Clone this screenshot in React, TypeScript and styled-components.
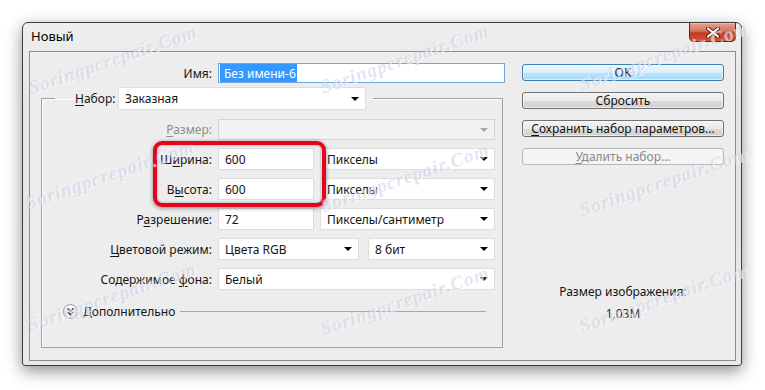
import styled, { createGlobalStyle } from "styled-components";

const GlobalStyle = createGlobalStyle`
  html, body {
    margin: 0;
    padding: 0;
    background: #ffffff;
  }
  body {
    font-family: "Noto Sans", "Liberation Sans", sans-serif;
    font-size: 12px;
    color: #141414;
  }
  *, *::before, *::after {
    box-sizing: border-box;
  }
  u {
    text-decoration-thickness: 1px;
    text-underline-offset: 2px;
  }
`;

const Page = styled.div`
  position: relative;
  width: 765px;
  height: 390px;
  overflow: hidden;
  padding: 22px 0 0 22px;
`;

const Window = styled.div`
  width: 720px;
  height: 344px;
  display: flex;
  flex-direction: column;
  padding: 0 5px 4px 6px;
  border: 1px solid #3d3d3d;
  border-radius: 6px 6px 3px 3px;
  background: linear-gradient(180deg, #eeeeee 0%, #e4e4e4 30%, #e9e9e9 100%);
  box-shadow: 0 5px 16px rgba(0, 0, 0, 0.45);
`;

const TitleBar = styled.div`
  height: 28px;
  display: flex;
  justify-content: space-between;
  align-items: flex-start;
`;

const Title = styled.div`
  line-height: 27px;
  padding-left: 2px;
  font-size: 13px;
  color: #000;
`;

const CloseButton = styled.div`
  width: 47px;
  height: 19px;
  display: flex;
  align-items: center;
  justify-content: center;
  border: 1px solid #6b1f14;
  border-top: none;
  border-radius: 0 0 5px 5px;
  background: linear-gradient(180deg, #e8a192 0%, #d6745f 45%, #c2391f 55%, #d0563a 100%);
  box-shadow: inset 0 1px 0 rgba(255, 255, 255, 0.35);
`;

const Content = styled.div`
  flex: 1;
  display: flex;
  border: 1px solid #8c8c8c;
  background: #ededed;
`;

const LeftCol = styled.div`
  width: 476px;
  padding-top: 11px;
  display: flex;
  flex-direction: column;
`;

const NameRow = styled.div`
  display: flex;
  align-items: center;
`;

const Label = styled.div<{ $w: number; $muted?: boolean }>`
  width: ${(p) => p.$w}px;
  flex-shrink: 0;
  padding-right: 6px;
  text-align: right;
  white-space: nowrap;
  color: ${(p) => (p.$muted ? "#8d8d8d" : "#141414")};
`;

const TextField = styled.div<{ $w: number; $h?: number; $focus?: boolean }>`
  width: ${(p) => p.$w}px;
  height: ${(p) => p.$h ?? 22}px;
  flex-shrink: 0;
  display: flex;
  align-items: center;
  padding-left: ${(p) => (p.$focus ? 1 : 6)}px;
  background: #ffffff;
  border: 1px solid ${(p) => (p.$focus ? "#6fa7dc" : "#dcdcdc")};
  white-space: nowrap;
  overflow: hidden;
`;

const Selected = styled.span`
  height: 100%;
  display: flex;
  align-items: center;
  padding: 0 1px 0 4px;
  background: #3399ff;
  color: #ffffff;
`;

const Select = styled.div<{ $w: number; $h?: number; $disabled?: boolean }>`
  width: ${(p) => p.$w}px;
  height: ${(p) => p.$h ?? 22}px;
  flex-shrink: 0;
  display: flex;
  align-items: center;
  justify-content: space-between;
  padding: 0 6px 0 6px;
  background: ${(p) => (p.$disabled ? "#f2f2f2" : "#ffffff")};
  border: 1px solid ${(p) => (p.$disabled ? "#d4d4d4" : "#dedede")};
  white-space: nowrap;
`;

const Arrow = styled.span<{ $disabled?: boolean }>`
  width: 0;
  height: 0;
  border-left: 4px solid transparent;
  border-right: 4px solid transparent;
  border-top: 4px solid ${(p) => (p.$disabled ? "#a8a8a8" : "#000000")};
`;

const GroupBox = styled.fieldset`
  margin: 4px 0 12px 11px;
  width: 462px;
  flex: 1;
  padding: 9px 6px 0 0;
  border: 1px solid #a3a3a3;
  box-shadow: inset 1px 1px 0 #fafafa;
  min-width: 0;
`;

const Legend = styled.legend`
  margin-left: 13px;
  padding: 0 7px 0 20px;
  display: flex;
  align-items: center;
`;

const Rows = styled.div`
  display: flex;
  flex-direction: column;
  gap: 8px;
`;

const Row = styled.div`
  display: flex;
  align-items: center;
`;

const Controls = styled.div<{ $gap?: number }>`
  display: flex;
  gap: ${(p) => p.$gap ?? 6}px;
`;

const Highlight = styled.div`
  position: relative;
  display: flex;
  flex-direction: column;
  gap: 8px;
  &::after {
    content: "";
    position: absolute;
    left: 111px;
    top: -7px;
    width: 173px;
    height: 66px;
    border: 4px solid #e3051b;
    border-radius: 9px;
    box-shadow: 0 1px 4px rgba(0, 0, 0, 0.45), inset 0 0 3px rgba(0, 0, 0, 0.35);
    pointer-events: none;
  }
`;

const MoreRow = styled.div`
  margin-top: 14px;
  padding-left: 21px;
  display: flex;
  align-items: center;
  height: 15px;
`;

const RoundToggle = styled.div`
  width: 15px;
  height: 15px;
  border-radius: 50%;
  border: 1px solid #9c9c9c;
  background: radial-gradient(circle at 40% 30%, #ffffff 0%, #eeeeee 55%, #d2d2d2 100%);
  display: flex;
  align-items: center;
  justify-content: center;
  margin-right: 5px;
`;

const Divider = styled.div`
  flex: 1;
  height: 1px;
  margin: 0 10px 0 5px;
  background: #a8a8a8;
`;

const RightCol = styled.div`
  width: 202px;
  margin-left: 16px;
  padding-top: 12px;
  display: flex;
  flex-direction: column;
  gap: 11px;
`;

const Button = styled.div<{ $default?: boolean; $disabled?: boolean }>`
  height: 17px;
  display: flex;
  align-items: center;
  justify-content: center;
  border-radius: 3px;
  white-space: nowrap;
  color: ${(p) => (p.$disabled ? "#8a8a8a" : "#111111")};
  border: 1px solid
    ${(p) => (p.$default ? "#3c7fb1" : p.$disabled ? "#b5b9bc" : "#707070")};
  background: ${(p) =>
    p.$disabled
      ? "#f4f4f4"
      : p.$default
      ? "linear-gradient(180deg, #eaf6fd 0%, #d9f0fc 50%, #bee6fd 51%, #a7d9f5 100%)"
      : "linear-gradient(180deg, #f2f2f2 0%, #ebebeb 50%, #dddddd 51%, #cfcfcf 100%)"};
  box-shadow: ${(p) => (p.$disabled ? "none" : "inset 0 0 0 1px rgba(255,255,255,0.6)")};
`;

const Info = styled.div`
  margin-top: auto;
  padding-bottom: 35px;
  text-align: center;
  line-height: 22px;
`;

const Watermark = styled.div<{ $x: number; $y: number }>`
  position: absolute;
  left: ${(p) => p.$x}px;
  top: ${(p) => p.$y}px;
  transform: translate(-50%, -50%) rotate(-19deg);
  font-family: "Liberation Serif", "DejaVu Serif", serif;
  font-style: italic;
  font-weight: bold;
  font-size: 19px;
  letter-spacing: 1px;
  white-space: nowrap;
  color: rgba(184, 194, 224, 0.42);
  text-shadow: 1px 1px 0 rgba(255, 255, 255, 0.6);
  pointer-events: none;
`;

const marks = [
  { x: 113, y: 60 },
  { x: 405, y: 59 },
  { x: 664, y: 56 },
  { x: 110, y: 175 },
  { x: 405, y: 178 },
  { x: 664, y: 182 },
  { x: 112, y: 297 },
  { x: 405, y: 301 },
  { x: 664, y: 298 },
];

const CloseIcon = () => (
  <svg width="14" height="11" viewBox="0 0 14 11">
    <path d="M2 1.5 L12 9.5 M12 1.5 L2 9.5" stroke="#5a1a10" strokeWidth="4" strokeLinecap="round" />
    <path d="M2 1.5 L12 9.5 M12 1.5 L2 9.5" stroke="#ffffff" strokeWidth="2.2" strokeLinecap="round" />
  </svg>
);

const ChevronsDown = () => (
  <svg width="9" height="9" viewBox="0 0 9 9">
    <path d="M1.5 1.5 L4.5 4 L7.5 1.5 M1.5 5 L4.5 7.5 L7.5 5" stroke="#1a1a1a" strokeWidth="1.5" fill="none" />
  </svg>
);

export default function App() {
  return (
    <>
      <GlobalStyle />
      <Page>
        <Window>
          <TitleBar>
            <Title>Новый</Title>
            <CloseButton>
              <CloseIcon />
            </CloseButton>
          </TitleBar>
          <Content>
            <LeftCol>
              <NameRow>
                <Label $w={188}>Имя:</Label>
                <TextField $w={287} $h={20} $focus>
                  <Selected>Без имени-6</Selected>
                </TextField>
              </NameRow>

              <GroupBox>
                <Legend>
                  <Label $w={43}>
                    <u>Н</u>абор:
                  </Label>
                  <Select $w={248} $h={23}>
                    Заказная
                    <Arrow />
                  </Select>
                </Legend>

                <Rows>
                  <Row>
                    <Label $w={176} $muted>
                      <u>Р</u>азмер:
                    </Label>
                    <Select $w={277} $h={21} $disabled>
                      <span />
                      <Arrow $disabled />
                    </Select>
                  </Row>

                  <Highlight>
                    <Row>
                      <Label $w={176}>
                        Ш<u>и</u>рина:
                      </Label>
                      <Controls>
                        <TextField $w={96}>600</TextField>
                        <Select $w={175}>
                          Пикселы
                          <Arrow />
                        </Select>
                      </Controls>
                    </Row>
                    <Row>
                      <Label $w={176}>
                        В<u>ы</u>сота:
                      </Label>
                      <Controls>
                        <TextField $w={96}>600</TextField>
                        <Select $w={175}>
                          Пикселы
                          <Arrow />
                        </Select>
                      </Controls>
                    </Row>
                  </Highlight>

                  <Row>
                    <Label $w={176}>
                      Р<u>а</u>зрешение:
                    </Label>
                    <Controls>
                      <TextField $w={96}>72</TextField>
                      <Select $w={175}>
                        Пикселы/сантиметр
                        <Arrow />
                      </Select>
                    </Controls>
                  </Row>

                  <Row>
                    <Label $w={176}>
                      <u>Ц</u>ветовой режим:
                    </Label>
                    <Controls $gap={9}>
                      <Select $w={141}>
                        Цвета RGB
                        <Arrow />
                      </Select>
                      <Select $w={127}>
                        8 бит
                        <Arrow />
                      </Select>
                    </Controls>
                  </Row>

                  <Row>
                    <Label $w={176}>
                      Содержимое <u>ф</u>она:
                    </Label>
                    <Select $w={277}>
                      Белый
                      <Arrow />
                    </Select>
                  </Row>
                </Rows>

                <MoreRow>
                  <RoundToggle>
                    <ChevronsDown />
                  </RoundToggle>
                  Дополнительно
                  <Divider />
                </MoreRow>
              </GroupBox>
            </LeftCol>

            <RightCol>
              <Button $default>OK</Button>
              <Button>Сбросить</Button>
              <Button>
                <span>
                  <u>С</u>охранить набор параметров...
                </span>
              </Button>
              <Button $disabled>
                <span>
                  <u>У</u>далить набор...
                </span>
              </Button>
              <Info>
                <div>Размер изображения:</div>
                <div>1,03M</div>
              </Info>
            </RightCol>
          </Content>
        </Window>

        {marks.map((m, i) => (
          <Watermark key={i} $x={m.x} $y={m.y}>
            Soringpcrepair.Com
          </Watermark>
        ))}
      </Page>
    </>
  );
}
